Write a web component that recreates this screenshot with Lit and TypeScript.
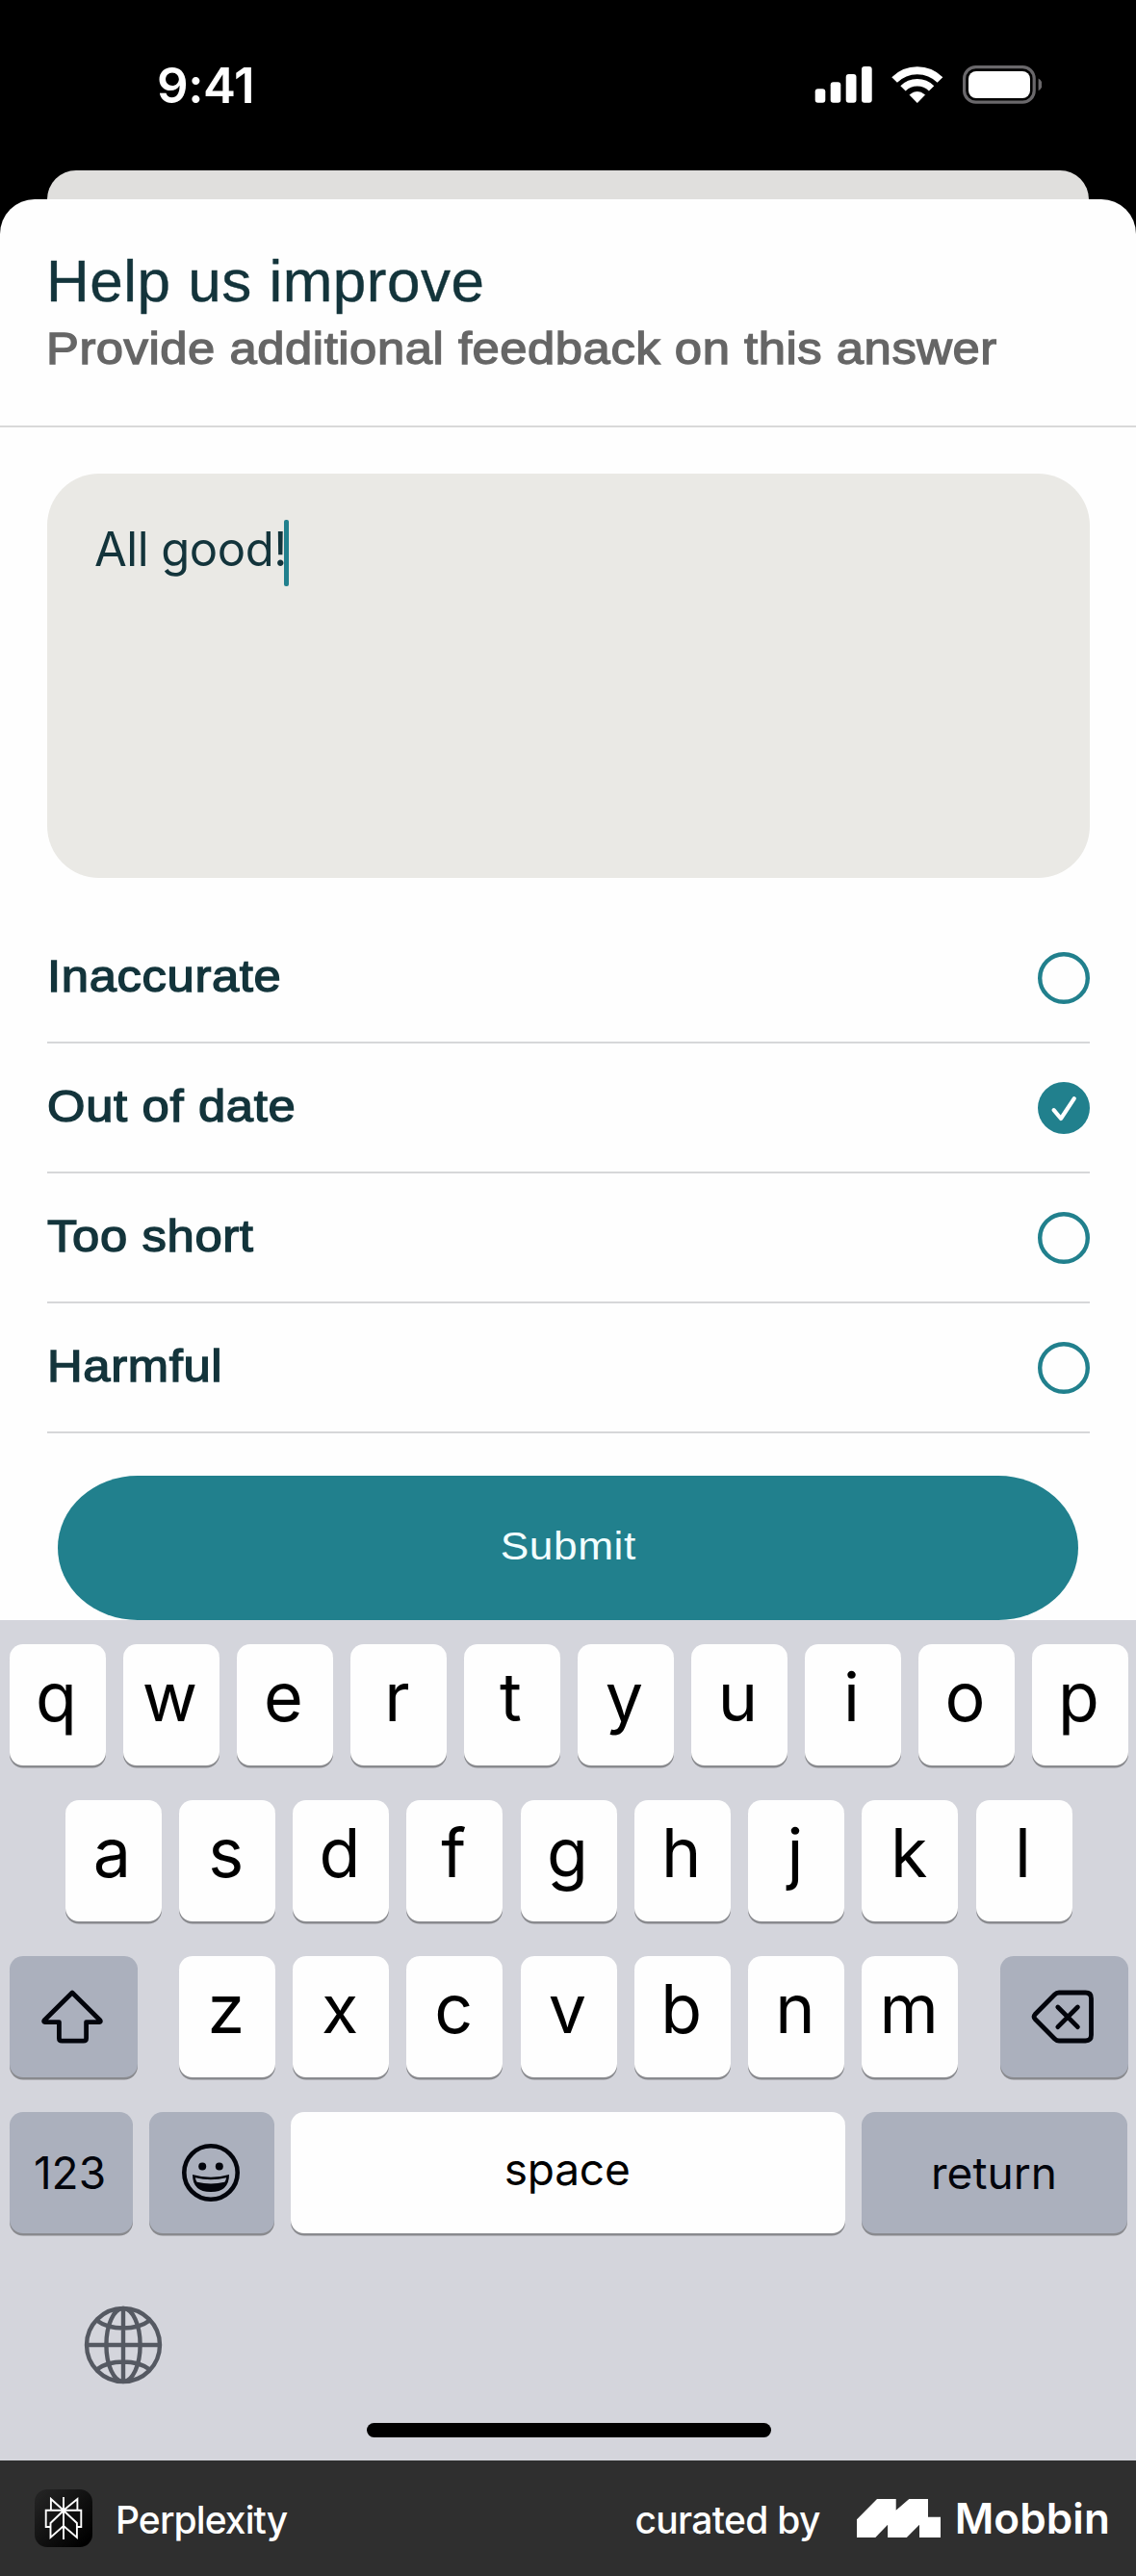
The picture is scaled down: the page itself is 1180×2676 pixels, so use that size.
import { LitElement, html, css, svg } from "lit";
import { customElement, property, state } from "lit/decorators.js";
import { classMap } from "lit/directives/class-map.js";

@customElement("status-bar")
class StatusBar extends LitElement {
  static styles = css`
    :host {
      display: flex;
      justify-content: space-between;
      align-items: center;
      height: 177px;
      padding: 0 98px 0 163px;
      box-sizing: border-box;
      color: #fff;
      font-family: Inter, sans-serif;
    }
    .time {
      font-size: 51px;
      line-height: 60px;
      font-weight: 600;
      letter-spacing: -0.4px;
    }
    .icons {
      display: block;
      width: 236px;
      height: 40px;
      transform: translateY(-1px);
    }
  `;
  render() {
    return html`
      <span class="time">9:41</span>
      <svg class="icons" viewBox="0 0 236 40">
        <g fill="#fff">
          <rect x="0.7" y="24.3" width="10.6" height="14.4" rx="3" />
          <rect x="16.7" y="17.2" width="10.6" height="21.5" rx="3" />
          <rect x="32.7" y="9.1" width="10.8" height="29.6" rx="3" />
          <rect x="49" y="1.1" width="10.7" height="37.6" rx="3" />
          <path d="M106.8 38.7 L98.9 30.6 Q106.8 24 114.7 30.6 Z" stroke="#fff" stroke-width="0.6" stroke-linejoin="round" />
        </g>
        <g fill="none" stroke="#fff">
          <path d="M83.1 15 A33.5 33.5 0 0 1 130.5 15" stroke-width="8" />
          <path d="M92 23.9 A21 21 0 0 1 121.6 23.9" stroke-width="7.6" />
        </g>
        <rect x="155.6" y="1.6" width="72.6" height="36.6" rx="12" fill="none" stroke="#6a686b" stroke-width="3.2" />
        <rect x="160" y="6" width="64" height="28" rx="8" fill="#fff" />
        <path d="M232.6 13.6 Q236.6 16 236.6 19.9 Q236.6 23.8 232.6 26.2 Z" fill="#6a686b" />
      </svg>
    `;
  }
}

@customElement("choice-row")
class ChoiceRow extends LitElement {
  @property() label = "";
  @property({ type: Boolean }) checked = false;
  static styles = css`
    :host {
      display: flex;
      justify-content: space-between;
      align-items: center;
      box-sizing: border-box;
      height: 135px;
      border-bottom: 2px solid #d6d7d9;
    }
    .label {
      padding-bottom: 3px;
      font-size: 47px;
      line-height: 60px;
      letter-spacing: 0.6px;
      -webkit-text-stroke: 1.4px #13343b;
      transform: scaleX(1.08);
      transform-origin: left;
    }
    .mark {
      display: block;
      width: 54px;
      height: 54px;
    }
  `;
  render() {
    return html`
      <span class="label">${this.label}</span>
      <svg class="mark" viewBox="0 0 54 54">
        ${this.checked
          ? svg`<circle cx="27" cy="27" r="27" fill="#21808d"/>
              <path d="M16.6 29.2 L24 38 L37.8 17.2" fill="none" stroke="#fff" stroke-width="4.2" stroke-linecap="round" stroke-linejoin="round"/>`
          : svg`<circle cx="27" cy="27" r="24.8" fill="none" stroke="#21808d" stroke-width="4.4"/>`}
      </svg>
    `;
  }
}

@customElement("key-board")
class KeyBoard extends LitElement {
  static styles = css`
    :host {
      display: flex;
      flex-direction: column;
      box-sizing: border-box;
      height: 873px;
      padding: 25px 8.5px 24px 9.5px;
      background: #d4d5dc;
      font-family: Inter, sans-serif;
      color: #000;
    }
    .rows {
      display: flex;
      flex-direction: column;
      gap: 36px;
    }
    .row {
      display: flex;
      justify-content: space-between;
    }
    .row.inset {
      padding: 0 58px;
    }
    .group {
      display: flex;
      gap: 18.2px;
    }
    .key {
      display: flex;
      align-items: center;
      justify-content: center;
      box-sizing: border-box;
      width: 100px;
      height: 126px;
      padding: 0 2px 16px 0;
      border-radius: 14px;
      background: #fefefe;
      box-shadow: 0 2.5px 0 #898a8e;
      font-size: 70px;
      line-height: 84px;
      font-weight: 400;
    }
    .key.gray {
      padding-bottom: 0;
      background: #abb0bd;
      color: #03050c;
    }
    .key.word {
      font-size: 46px;
      font-weight: 400;
    }
    .shift,
    .delete {
      width: 133px;
    }
    .numbers {
      width: 128px;
    }
    .emoji {
      width: 130px;
    }
    .space {
      width: 576px;
      padding-bottom: 8px;
      letter-spacing: -0.2px;
    }
    .return {
      width: 276px;
    }
    .key svg,
    .globe {
      display: block;
    }
    .globe {
      width: 82px;
      height: 82px;
      margin: 75px 0 0 77.5px;
    }
    .home {
      width: 420px;
      height: 15px;
      margin: auto auto 0;
      border-radius: 8px;
      background: #000;
    }
  `;
  private letters(chars: string) {
    return [...chars].map((c) => html`<span class="key">${c}</span>`);
  }
  render() {
    return html`
      <div class="rows">
        <div class="row">${this.letters("qwertyuiop")}</div>
        <div class="row inset">${this.letters("asdfghjkl")}</div>
        <div class="row">
          <span class="key gray shift">
            <svg width="64" height="56" viewBox="0 0 64 56" fill="none" stroke="#03050c" stroke-width="4.8" stroke-linejoin="round">
              <path d="M32 3 L61 31.8 Q62 33.3 60 33.6 H46.6 V50.2 Q46.6 53.2 43.6 53.2 H21.4 Q18.4 53.2 18.4 50.2 V33.6 H4 Q2 33.3 3 31.8 Z" />
            </svg>
          </span>
          <div class="group">${this.letters("zxcvbnm")}</div>
          <span class="key gray delete">
            <svg width="66" height="56" viewBox="0 0 66 56" fill="none" stroke="#03050c" stroke-width="4.8" stroke-linejoin="round" stroke-linecap="round">
              <path d="M29 3 H56.5 Q62.5 3 62.5 9 V47 Q62.5 53 56.5 53 H29 Q26.5 53 24.5 51 L4.2 30.5 Q2 28 4.2 25.5 L24.5 5 Q26.5 3 29 3 Z" />
              <path d="M27.8 18 L48.4 38.6 M48.4 18 L27.8 38.6" />
            </svg>
          </span>
        </div>
        <div class="row">
          <span class="key gray word numbers">123</span>
          <span class="key gray emoji">
            <svg width="62" height="62" viewBox="0 0 62 62">
              <circle cx="31" cy="31" r="27.7" fill="none" stroke="#03050c" stroke-width="4.6" />
              <circle cx="22.2" cy="24.4" r="4" fill="#03050c" />
              <circle cx="39.8" cy="24.4" r="4" fill="#03050c" />
              <path d="M12 33 Q31 38.5 50 33 Q50 51 31 51 Q12 51 12 33 Z" fill="#03050c" />
              <path d="M14.8 36.2 Q31 40.4 47.2 36.2 Q46.6 39 45.4 40.8 Q31 44 16.6 40.8 Q15.4 39 14.8 36.2 Z" fill="#abb0bd" />
            </svg>
          </span>
          <span class="key word space">space</span>
          <span class="key gray word return">return</span>
        </div>
      </div>
      <svg class="globe" viewBox="0 0 82 82" fill="none" stroke="#555962" stroke-width="4.4">
        <circle cx="41" cy="41" r="38" />
        <ellipse cx="41" cy="41" rx="17.6" ry="38" />
        <path d="M41 3 V79 M3 41 H79 M13.5 15.5 Q24 23.5 41 23.5 Q58 23.5 68.5 15.5 M13.5 66.5 Q24 58.5 41 58.5 Q58 58.5 68.5 66.5" />
      </svg>
      <div class="home"></div>
    `;
  }
}

@customElement("credit-bar")
class CreditBar extends LitElement {
  static styles = css`
    :host {
      display: flex;
      align-items: center;
      box-sizing: border-box;
      height: 120px;
      padding: 0 27px 0 36px;
      background: #2f2f2f;
      color: #fff;
      font-family: Inter, sans-serif;
      font-size: 39px;
      line-height: 48px;
      font-weight: 500;
    }
    .app {
      display: block;
      width: 60px;
      height: 60px;
      border-radius: 13px;
      background: linear-gradient(135deg, #222 10%, #000 90%);
    }
    .name {
      flex: 1;
      padding: 3px 0 0 24px;
      letter-spacing: -0.9px;
    }
    .by {
      padding-top: 3px;
      letter-spacing: -0.7px;
    }
    .logo {
      display: block;
      width: 87px;
      height: 40px;
      margin: 0 15px 0 38px;
    }
    .brand {
      font-size: 44px;
      font-weight: 600;
      letter-spacing: 0.1px;
    }
  `;
  render() {
    return html`
      <svg class="app" viewBox="0 0 60 60" fill="none" stroke="#fff" stroke-width="1.9">
        <path d="M30 8 V52 M30 21.8 L16.9 10 V21.8 M30 21.8 L44.4 10 V21.8 M16.5 39 H11.7 V21.8 H48.3 V39 H43.9 M30 22 L16.5 35 V50 L30 38 L43.9 50 V35 L30 22" />
      </svg>
      <span class="name">Perplexity</span>
      <span class="by">curated by</span>
      <svg class="logo" viewBox="0 0 87 40" fill="#fff">
        <path d="M0 21.3 L21 0 H40.7 V11.7 L54.3 0 H74 V18.7 H87 V40 H65 V26.7 L51.8 40 H32.1 V26.7 L19.3 40 H0 Z" />
      </svg>
      <span class="brand">Mobbin</span>
    `;
  }
}

@customElement("app-root")
class AppRoot extends LitElement {
  @state() private message = "All good!";
  @state() private options = [
    { label: "Inaccurate", checked: false },
    { label: "Out of date", checked: true },
    { label: "Too short", checked: false },
    { label: "Harmful", checked: false },
  ];
  static styles = css`
    :host {
      display: block;
      width: 1180px;
      background: #000;
      font-family: "Liberation Sans", Arial, sans-serif;
      color: #13343b;
    }
    .behind {
      height: 30px;
      margin: 0 49px;
      border-radius: 30px 30px 0 0;
      background: #e0dfdd;
    }
    .sheet {
      display: flex;
      flex-direction: column;
      box-sizing: border-box;
      height: 1476px;
      border-radius: 36px 36px 0 0;
      background: #fefefe;
    }
    .head {
      box-sizing: border-box;
      height: 237px;
      padding: 49px 48px 0;
      border-bottom: 2px solid #d9d9d9;
    }
    .title {
      margin: 0;
      font-size: 62px;
      line-height: 72px;
      font-weight: 400;
      letter-spacing: 0.5px;
      -webkit-text-stroke: 0.4px #13343b;
    }
    .sub {
      margin: 4px 0 0;
      font-size: 47px;
      line-height: 60px;
      letter-spacing: 0.5px;
      white-space: nowrap;
      color: #666;
      -webkit-text-stroke: 1.4px #666;
      transform: scaleX(1.08);
      transform-origin: left;
    }
    .field {
      display: flex;
      align-items: flex-start;
      box-sizing: border-box;
      height: 420px;
      margin: 48px 48px 0 49px;
      padding: 48px 49px;
      border-radius: 54px;
      background: #eae9e5;
      font-family: Inter, sans-serif;
      font-size: 49px;
      line-height: 62px;
      letter-spacing: -0.5px;
    }
    .caret {
      width: 5.5px;
      height: 69px;
      margin-left: -3px;
      border-radius: 2px;
      background: #21808d;
    }
    .list {
      margin: 37px 48px 0 49px;
    }
    .submit {
      display: flex;
      align-items: center;
      justify-content: center;
      box-sizing: border-box;
      height: 150px;
      margin: 44px 60px 0;
      padding-bottom: 4px;
      border-radius: 83px / 75px;
      background: #21808d;
      color: #f2feff;
      font-size: 41px;
      letter-spacing: 0.5px;
    }
    .submit-text {
      transform: scaleX(1.08);
    }
    .hidden {
      display: none;
    }
  `;
  render() {
    return html`
      <status-bar></status-bar>
      <div class="behind"></div>
      <main class="sheet">
        <header class="head">
          <h1 class="title">Help us improve</h1>
          <p class="sub">Provide additional feedback on this answer</p>
        </header>
        <div class="field">
          <span>${this.message}</span>
          <span class=${classMap({ caret: true, hidden: !this.message })}></span>
        </div>
        <div class="list">
          ${this.options.map((o) => html`<choice-row .label=${o.label} .checked=${o.checked}></choice-row>`)}
        </div>
        <div class="submit"><span class="submit-text">Submit</span></div>
      </main>
      <key-board></key-board>
      <credit-bar></credit-bar>
    `;
  }
}
